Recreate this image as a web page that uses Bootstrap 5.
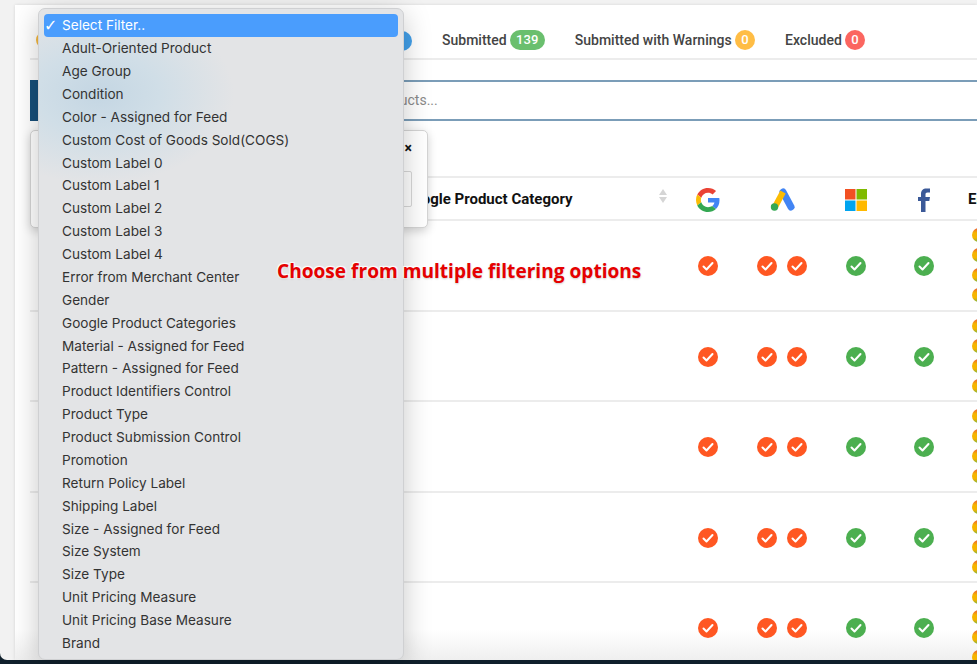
<!DOCTYPE html>
<html lang="en">
<head>
<meta charset="utf-8">
<title>Product feed</title>
<link rel="stylesheet" href="https://cdn.jsdelivr.net/npm/bootstrap@5.3.0/dist/css/bootstrap.min.css">
<style>
html,body{height:664px;overflow:hidden}
body{background:#10202c;font-family:Roboto,"Liberation Sans",sans-serif;position:relative}
.appwin{height:660px;background:#f2f2f2;border-bottom-left-radius:7px;padding:5px 0 0 15px;overflow:hidden}
.frame{height:655px;background:linear-gradient(#fff calc(100% - 30px),#efefef 100%);overflow:hidden;padding:0 0 0 15px;box-shadow:0 0 3px rgba(0,0,0,.12)}
.tabbar{height:55px;border-bottom:2px solid #ececec;padding-top:17px;gap:30px;font-size:14px;font-weight:500;color:#444;padding-left:412px}
.tabbar>div{display:flex;align-items:center}
.tabbar span.pill{display:inline-block;min-width:20px;height:20px;line-height:20px;border-radius:10px;color:#fff;font-size:13px;text-align:center;padding:0 6.5px;margin-left:3px;font-weight:500}
.dot-l{position:absolute;left:36px;top:31px;width:18px;height:18px;border-radius:50%;background:#f5b83d}
.dot-b{position:absolute;left:392px;top:31px;width:20px;height:20px;border-radius:50%;background:#43a0ea}
.searchrow{margin-top:20px;height:41px}
.searchbtn{width:295px;background:#174f7a;flex:none}
.searchinput{flex:1;border:0;border-top:2px solid #7b9db8;border-bottom:2px solid #7b9db8;font-size:14px;font-family:Roboto,sans-serif;padding:0;outline:0;border-radius:0}
.searchinput::placeholder{color:#8a8a8a}
.ftable{table-layout:fixed;width:1000px;margin:55px 0 0;border-collapse:collapse}
.ftable th{height:43px;border-top:2px solid #ececec;border-bottom:2px solid #ececec;font-size:15px;font-weight:700;color:#111;vertical-align:middle;padding:2px 0 0;font-family:Roboto,"Liberation Sans",sans-serif}
.ftable td{height:90.5px;border-bottom:2px solid #ececec;padding:0;vertical-align:middle;text-align:center}
.sorter{float:right;margin-right:12px;display:block}
.st{display:inline-block;width:20px;height:20px;vertical-align:middle}
.st+.st{margin-left:10px}
.warns{display:flex;flex-direction:column;gap:6px;padding-left:8px}
.warns i{display:block;width:14px;height:14px;border-radius:50%;background:linear-gradient(#ea5a3a,#f6b400 35%,#f6b400 70%,#7cb342)}
.pop{position:absolute;left:30px;top:130px;width:398px;height:98px;background:#fff;border:1px solid #d4d4d4;border-radius:5px;box-shadow:0 3px 10px rgba(0,0,0,.18)}
.pop-x{position:absolute;right:15px;top:9px;font-size:14px;font-weight:700;line-height:16px;color:#111}
.pop-in{position:absolute;right:15px;top:40px;width:200px;height:36px;border:1px solid #d8d8d8;border-radius:2px}
.fmenu.dropdown-menu{position:absolute;left:38px;top:8px;width:366px;height:652px;margin:0;padding:5.3px 5px 5px;border:1px solid #cfd0d2;border-radius:7px;background:radial-gradient(ellipse 135px 90px at 60px 85px,#c4d6e3 0,#d0dee7 45%,rgba(227,228,230,0) 100%),#e3e4e6;box-shadow:0 6px 28px rgba(0,0,0,.22);font-family:Inter,"Liberation Sans",sans-serif;font-size:13.6px;list-style:none}
.fmenu li{height:22.89px;line-height:23.4px;padding-left:18px;color:#333;white-space:nowrap;border-radius:4px;position:relative}
.fmenu li.sel{background:#4a9dfd;color:#fff}
.fmenu li.sel::before{content:"✓";position:absolute;left:0;top:0;font-family:"DejaVu Sans",sans-serif;font-size:16px}
.note{position:absolute;z-index:1001;left:277px;top:258px;font-family:"Open Sans",sans-serif;font-weight:700;font-size:19.1px;line-height:26px;color:#e60000;white-space:nowrap;text-shadow:0 1px 2px rgba(0,0,0,.2),0 0 2px #fff,1px 1px 1px #fff,-1px -1px 1px #fff,1px -1px 1px #fff,-1px 1px 1px #fff}
</style>
</head>
<body>
<svg width="0" height="0" class="position-absolute">
<symbol id="ok" viewBox="0 0 20 20"><path d="M5.500 10.500l3 3 6-6.500" fill="none" stroke="#fff" stroke-width="2" stroke-linecap="round" stroke-linejoin="round"/></symbol>
</svg>
<div class="appwin">
<div class="frame">
  <div class="tabbar d-flex align-items-center">
    <div>Submitted<span class="pill" style="background:#6abf6e">139</span></div>
    <div>Submitted with Warnings<span class="pill" style="background:#ffbd45">0</span></div>
    <div>Excluded<span class="pill" style="background:#fb6660">0</span></div>
  </div>
  <div class="searchrow d-flex">
    <div class="searchbtn"></div>
    <input class="searchinput" placeholder="Search products...">
  </div>
  <table class="ftable">
    <colgroup><col style="width:650px"><col style="width:56px"><col style="width:92px"><col style="width:56px"><col style="width:80px"><col style="width:66px"></colgroup>
    <thead><tr>
      <th><span style="padding-left:373px">Google Product Category</span>
        <svg class="sorter" width="10" height="16" viewBox="0 0 10 16"><path d="M5 1l4 6H1zM5 15l4-6H1z" fill="#d5d5d5"/></svg></th>
      <th class="text-center"><svg width="24" height="24" viewBox="0 0 48 48" class="d-block mx-auto"><path fill="#EA4335" d="M24 9.500c3.500 0 6.700 1.200 9.200 3.600l6.900-6.900C35.900 2.400 30.500 0 24 0 14.600 0 6.500 5.400 2.600 13.200l8 6.200C12.400 13.700 17.700 9.500 24 9.500z"/><path fill="#4285F4" d="M47 24.500c0-1.600-.2-3.100-.4-4.500H24v9h12.900c-.6 3-2.200 5.500-4.700 7.200l7.700 6C44.400 38 47 31.800 47 24.500z"/><path fill="#FBBC05" d="M10.500 28.600c-.5-1.400-.8-3-.8-4.600s.3-3.200.8-4.600l-8-6.200C.9 16.500 0 20.100 0 24s.9 7.500 2.600 10.800l7.900-6.200z"/><path fill="#34A853" d="M24 48c6.500 0 11.900-2.100 15.900-5.800l-7.700-6c-2.200 1.400-4.900 2.300-8.200 2.300-6.300 0-11.600-4.200-13.500-9.900l-8 6.200C6.500 42.600 14.600 48 24 48z"/></svg></th>
      <th class="text-center"><svg width="26" height="24" viewBox="0 0 26 24" class="d-block mx-auto"><path d="M14 4l8 15" stroke="#4285F4" stroke-width="7" stroke-linecap="round"/><path d="M14 4l-7.500 14" stroke="#FBBC04" stroke-width="6"/><circle cx="5.500" cy="19" r="3.700" fill="#34A853"/></svg></th>
      <th class="text-center"><svg width="24" height="24" viewBox="0 0 24 24" class="d-block mx-auto"><path fill="#F25022" d="M1 1h10.500v10.500H1z"/><path fill="#7FBA00" d="M12.500 1H23v10.500H12.500z"/><path fill="#00A4EF" d="M1 12.500h10.500V23H1z"/><path fill="#FFB900" d="M12.500 12.500H23V23H12.500z"/></svg></th>
      <th class="text-center"><svg width="14" height="24" viewBox="0 0 14 24" class="d-block mx-auto"><path fill="#3b5998" d="M4 24V13H1V9h3V6c0-3.500 2-5.500 5.500-5.500H13v4h-2.500C9 4.500 8.500 5.200 8.500 6.500V9H13l-.7 4H8.500v11z"/></svg></th>
      <th style="padding-left:4px">Errors</th>
    </tr></thead>
    <tbody id="rows"></tbody>
  </table>
</div>
</div>
<span class="dot-l"></span><span class="dot-b"></span>
<div class="pop card"><span class="pop-x">×</span><div class="pop-in"></div></div>
<ul class="dropdown-menu show fmenu" id="menu"></ul>
<div class="note">Choose from multiple filtering options</div>
<script>
const items=["Select Filter..","Adult-Oriented Product","Age Group","Condition","Color - Assigned for Feed","Custom Cost of Goods Sold(COGS)","Custom Label 0","Custom Label 1","Custom Label 2","Custom Label 3","Custom Label 4","Error from Merchant Center","Gender","Google Product Categories","Material - Assigned for Feed","Pattern - Assigned for Feed","Product Identifiers Control","Product Type","Product Submission Control","Promotion","Return Policy Label","Shipping Label","Size - Assigned for Feed","Size System","Size Type","Unit Pricing Measure","Unit Pricing Base Measure","Brand"];
document.getElementById('menu').innerHTML=items.map((t,i)=>`<li class="${i?'':'sel'}">${t}</li>`).join('');
const st=c=>`<svg class="st" viewBox="0 0 20 20"><circle cx="10" cy="10" r="10" fill="${c}"/><use href="#ok"/></svg>`;
const o='#ff5722',g='#4caf50';
document.getElementById('rows').innerHTML=Array(5).fill(`<tr><td></td><td>${st(o)}</td><td>${st(o)}${st(o)}</td><td>${st(g)}</td><td>${st(g)}</td><td><div class="warns"><i></i><i></i><i></i><i></i></div></td></tr>`).join('');
</script>
<script src="https://cdn.jsdelivr.net/npm/bootstrap@5.3.0/dist/js/bootstrap.bundle.min.js"></script>
</body>
</html>
